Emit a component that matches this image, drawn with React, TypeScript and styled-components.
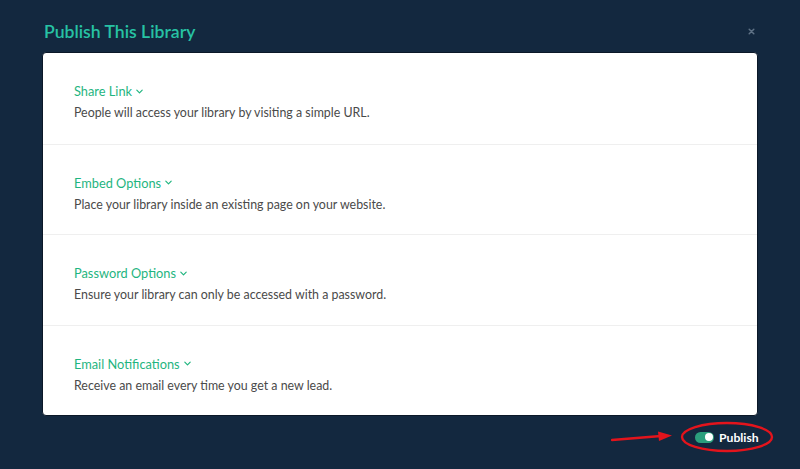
import React from 'react';
import styled, { createGlobalStyle } from 'styled-components';

const sections = [
  { title: 'Share Link', text: 'People will access your library by visiting a simple URL.' },
  { title: 'Embed Options', text: 'Place your library inside an existing page on your website.' },
  { title: 'Password Options', text: 'Ensure your library can only be accessed with a password.' },
  { title: 'Email Notifications', text: 'Receive an email every time you get a new lead.' },
];

export default function App() {
  return (
    <>
      <GlobalStyle />
      <Page>
        <Header>
          <Title>Publish This Library</Title>
          <Close aria-label="close">
            <svg width="7" height="7" viewBox="0 0 7 7">
              <path d="M1.2 1.2L5.8 5.8M5.8 1.2L1.2 5.8" stroke="#5f7286" strokeWidth="1.5" strokeLinecap="round" />
            </svg>
          </Close>
        </Header>
        <Panel>
          {sections.map((s) => (
            <Section key={s.title}>
              <SectionTitle>
                {s.title}
                <svg width="9" height="9" viewBox="0 0 10 10">
                  <path d="M2 3.5L5 6.5L8 3.5" fill="none" stroke="#1fb57f" strokeWidth="1.3" strokeLinecap="round" strokeLinejoin="round" />
                </svg>
              </SectionTitle>
              <Description>{s.text}</Description>
            </Section>
          ))}
        </Panel>
        <Footer>
          <Arrow width="62" height="14" viewBox="0 0 62 14">
            <path d="M1 10L50 6" stroke="#e3141c" strokeWidth="2.4" strokeLinecap="round" />
            <path d="M47 1.5L61 5.5L48 11Z" fill="#e3141c" />
          </Arrow>
          <PublishToggle>
            <Switch>
              <Knob />
            </Switch>
            <PublishLabel>Publish</PublishLabel>
            <Ring width="94" height="32" viewBox="0 0 94 32">
              <ellipse cx="47" cy="16" rx="45" ry="14" fill="none" stroke="#e3141c" strokeWidth="2.4" />
            </Ring>
          </PublishToggle>
        </Footer>
      </Page>
    </>
  );
}

const GlobalStyle = createGlobalStyle`
  html, body {
    margin: 0;
    padding: 0;
    background: #13283f;
  }
  * {
    box-sizing: border-box;
  }
`;

const Page = styled.div`
  width: 800px;
  height: 469px;
  background: #13283f;
  font-family: Lato, 'Noto Sans', sans-serif;
  padding: 0 42px;
  display: flex;
  flex-direction: column;
`;

const Header = styled.div`
  height: 52px;
  display: flex;
  align-items: flex-start;
  justify-content: space-between;
  padding: 21px 0 0 2px;
`;

const Title = styled.h1`
  margin: 0;
  font-size: 17.6px;
  line-height: 22px;
  font-weight: 600;
  color: #27c2a4;
`;

const Close = styled.span`
  display: flex;
  margin: 7px 3px 0 0;
`;

const Panel = styled.div`
  background: #fff;
  border-radius: 4px;
  border: 1px solid #0b1828;
  display: flex;
  flex-direction: column;
`;

const Section = styled.div`
  height: 90.5px;
  padding: 30px 31px 0;
  border-top: 1px solid #efefef;

  &:first-child {
    border-top: none;
  }
`;

const SectionTitle = styled.div`
  display: flex;
  align-items: center;
  gap: 3px;
  font-size: 12.8px;
  color: #1fb57f;
  line-height: 16px;
`;

const Description = styled.p`
  margin: 6px 0 0;
  font-size: 12.4px;
  color: #4a4a4a;
  line-height: 16px;
`;

const Footer = styled.div`
  flex: 1;
  display: flex;
  align-items: flex-start;
  justify-content: flex-end;
  padding-top: 6px;
`;

const Arrow = styled.svg`
  margin: 8px 8px 0 0;
`;

const PublishToggle = styled.div`
  position: relative;
  display: flex;
  align-items: center;
  gap: 5px;
  padding: 0 0 0 14px;
  width: 92px;
  height: 30px;
  margin-right: -15px;
`;

const Switch = styled.div`
  width: 19px;
  height: 11px;
  border-radius: 6px;
  background: #2b9f7d;
  display: flex;
  align-items: center;
  justify-content: flex-end;
  padding: 0 1.5px;
`;

const Knob = styled.div`
  width: 8px;
  height: 8px;
  border-radius: 50%;
  background: #fff;
`;

const PublishLabel = styled.span`
  font-size: 12.2px;
  font-weight: 700;
  color: #fff;
`;

const Ring = styled.svg`
  position: absolute;
  left: -1px;
  top: -1px;
`;
